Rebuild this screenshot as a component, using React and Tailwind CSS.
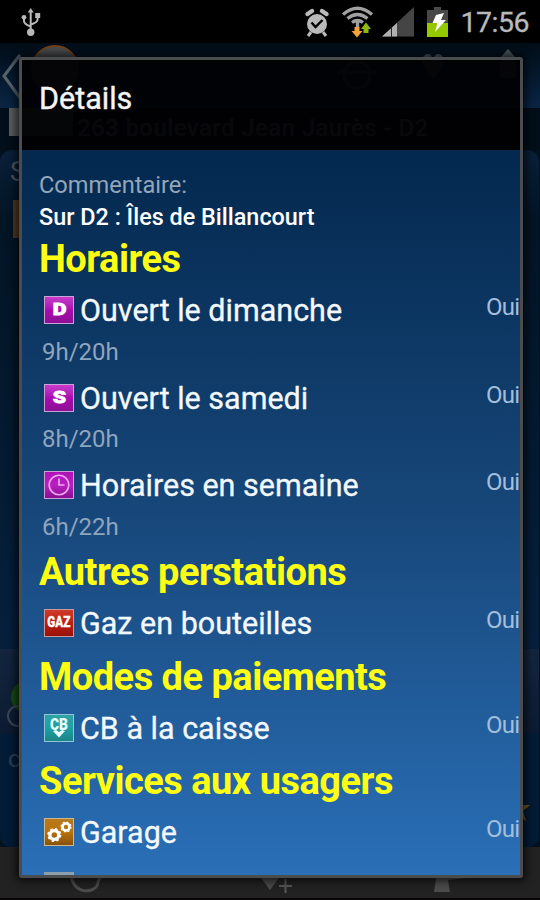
import React from 'react'

const sections = [
  {
    title: 'Horaires',
    items: [
      { icon: 'sunday', name: 'Ouvert le dimanche', detail: '9h/20h' },
      { icon: 'saturday', name: 'Ouvert le samedi', detail: '8h/20h' },
      { icon: 'clock', name: 'Horaires en semaine', detail: '6h/22h' },
    ],
  },
  { title: 'Autres perstations', items: [{ icon: 'gas', name: 'Gaz en bouteilles' }] },
  { title: 'Modes de paiements', items: [{ icon: 'card', name: 'CB à la caisse' }] },
  { title: 'Services aux usagers', items: [{ icon: 'gears', name: 'Garage' }] },
]

const tiles = {
  sunday: 'from-[#c63bc9] via-[#a80bb0] to-[#8c0f93] border-[#c9a0d8]',
  saturday: 'from-[#c63bc9] via-[#a80bb0] to-[#8c0f93] border-[#c9a0d8]',
  clock: 'from-[#b010b8] via-[#b81fc0] to-[#8a0f92] border-[#c9a0d8]',
  gas: 'from-[#cf3a2a] via-[#bd1d12] to-[#991108] border-[#c99a9a]',
  card: 'from-[#2fa3a6] via-[#1fa0a3] to-[#1b8588] border-[#8fc6d6]',
  gears: 'from-[#b87a1c] via-[#b8720f] to-[#8a5208] border-[#cdb98f]',
}

function Gear({ cx, cy, r }) {
  return (
    <g transform={`translate(${cx} ${cy})`} stroke="#fff" fill="none">
      <circle r={r} strokeWidth={r * 0.75} />
      <circle r={r * 1.4} strokeWidth={r * 0.4} strokeDasharray={`${r * 0.55} ${r * 0.55}`} />
    </g>
  )
}

function Glyph({ name }) {
  if (name === 'sunday') return <span className="text-[17px] font-black scale-x-125 [-webkit-text-stroke:0.8px_white]">D</span>
  if (name === 'saturday') return <span className="text-[17px] font-black scale-x-125 [-webkit-text-stroke:0.8px_white]">S</span>
  if (name === 'gas') return <span className="text-[15px] font-black scale-x-[0.78] [-webkit-text-stroke:0.3px_white]">GAZ</span>
  if (name === 'clock') {
    return (
      <svg viewBox="0 0 28 26" className="w-7 h-[26px]" fill="none" stroke="#f0a8f4" strokeWidth="1.6">
        <circle cx="14" cy="13" r="9.8" />
        <path d="M14 6.500V13h5.500" />
      </svg>
    )
  }
  if (name === 'card') {
    return (
      <svg viewBox="0 0 28 26" className="w-7 h-[26px]" fill="#e8ffff">
        <text x="14" y="14.500" textAnchor="middle" fontSize="17" fontWeight="900" textLength="18" lengthAdjust="spacingAndGlyphs">CB</text>
        <path d="M8 16l3-1 3 2 3-2 3 1-6 6.500z" />
      </svg>
    )
  }
  return (
    <svg viewBox="0 0 28 26" className="w-7 h-[26px]">
      <Gear cx={9.3} cy={16} r={4.4} />
      <Gear cx={21} cy={8} r={3.5} />
    </svg>
  )
}

function Tile({ name }) {
  return (
    <span className={`flex w-[30px] h-7 shrink-0 items-center justify-center border bg-linear-to-b leading-none text-white ${tiles[name]}`}>
      <Glyph name={name} />
    </span>
  )
}

function Item({ item }) {
  return (
    <div>
      <div className="flex h-[54.8px] pt-[12px] pl-[5px]">
        <Tile name={item.icon} />
        <span className="ml-[6px] -mt-[3px] text-[30.5px] leading-[36px] text-[#f3f8fc] [-webkit-text-stroke:0.3px_#f3f8fc]">{item.name}</span>
        <span className="ml-auto w-[34px] shrink-0 -mt-[4px] text-[24px] leading-[30px] tracking-[-0.7px] text-[#a3bedb]">Oui</span>
      </div>
      {item.detail && (
        <div className="h-[33px] pl-[3px] text-[24px] leading-[26px] text-[#8ea5bd]">{item.detail}</div>
      )}
    </div>
  )
}

function StatusBar() {
  return (
    <div className="flex h-[43px] items-center bg-black text-[#b9b9b9]">
      <svg viewBox="0 0 22 30" className="ml-5 w-[22px] h-[30px]" fill="#b9b9b9" stroke="#b9b9b9" strokeWidth="2">
        <path d="M10.7 5v20M4 10v4q0 3 6.500 5.500M17.6 8v4.500q0 3-6.800 5" fill="none" />
        <path d="M10.7 1l3 4.500h-6z" strokeWidth="0" />
        <circle cx="10.7" cy="25.200" r="3.700" strokeWidth="0" />
        <circle cx="4" cy="10.300" r="2.400" strokeWidth="0" />
        <path d="M15.2 6h5v5h-5z" strokeWidth="0" />
      </svg>
      <svg viewBox="0 0 150 34" className="ml-auto w-[150px] h-[34px]">
        <g fill="#b9b9b9" stroke="#b9b9b9">
          <circle cx="18" cy="19" r="10" strokeWidth="0" />
          <path d="M8.500 9l4.500-3M23 6l4.500 3" strokeWidth="4.500" strokeLinecap="round" />
          <path d="M12 27l-3 4M24 27l3 4" strokeWidth="3" />
          <path d="M12.500 17.500l4 4.500 7-7" fill="none" stroke="#000" strokeWidth="2.400" />
        </g>
        <g fill="none" stroke="#a0a0a0" strokeWidth="3.400">
          <path d="M44 9.500Q58.500-3 73 9.500" />
          <path d="M48.500 13.500q10-8 20 0" />
          <path d="M53 17.500q5.500-4 11 0" />
          <path d="M58.500 17v6" />
        </g>
        <path d="M55.500 22h5v4h3l-5.500 6.500-5.500-6.500h3z" fill="#f5a23b" />
        <path d="M64.500 28h5v-4h2.500l-5-6.500-5 6.500h2.500z" fill="#8fb80e" />
        <path d="M115 2v29.500H83z" fill="#454545" />
        <path d="M83 31.500L98 18v13.500z" fill="#b0b0b0" />
        <path d="M92.500 22v10" stroke="#222" strokeWidth="1" />
        <path d="M128 5h7V2h7v3h7v14h-21z" fill="#484848" />
        <path d="M128 18h21v14h-21z" fill="#94c800" />
        <path d="M137 10l8-2-3 7h5l-11 12 2.500-9h-5z" fill="#fff" />
      </svg>
      <span className="ml-[12px] mr-[11px] mt-[3px] text-[28.5px] leading-none tracking-[-0.5px] [-webkit-text-stroke:0.3px_#b9b9b9]">17:56</span>
    </div>
  )
}

function StationPage() {
  return (
    <div className="flex h-full flex-col bg-[#03101d]">
      <StatusBar />
      <div className="flex h-[65px] justify-between overflow-hidden bg-linear-to-b from-[#020d18] to-[#0a2544]">
        <div className="flex">
          <svg viewBox="0 0 22 60" className="w-[22px] h-[60px]" fill="none" stroke="#56636d" strokeWidth="3">
            <path d="M20 12L4 33l16 22" />
          </svg>
          <span className="ml-[9px] mt-[2px] size-12 rounded-full border-2 border-[#70431c] bg-[#4b4c4e]" />
        </div>
        <svg viewBox="0 0 210 60" className="w-[210px] h-[60px]" fill="#4b5a60">
          <path d="M178 6l8 9v20h-16V15z" />
          <path d="M95 12c5-3 7 2 8 4 1-2 3-7 8-4 8 6-3 18-8 24-5-6-16-18-8-24z" />
          <circle cx="27" cy="32" r="13" fill="none" stroke="#4b5a60" strokeWidth="3" />
          <path d="M8 29h38" stroke="#4b5a60" strokeWidth="3" />
        </svg>
      </div>
      <div className="flex h-[42px] bg-[#020e1a]">
        <span className="ml-[9px] h-7 w-16 shrink-0 bg-[#5a5c5d]" />
        <span className="ml-1 mt-[5px] text-[24px] font-medium leading-[30px] tracking-[0.4px] whitespace-nowrap text-[#929292]">263 boulevard Jean Jaurès - D2</span>
      </div>
      <div className="flex w-[539px] flex-1 flex-col overflow-hidden rounded-xl bg-linear-to-b from-[#0a2039] from-0% via-[#031424] via-10% to-[#082548] to-100%">
        <div className="h-[50px] pl-[10px] pt-1 text-[27px] leading-9 text-[#4b5762]">S</div>
        <div className="ml-[13px] h-[38px] w-6 bg-[#533b22]" />
        <div className="mt-auto flex h-[84px] flex-col bg-linear-to-b from-[#13253e] to-[#0c1b31]">
          <div className="ml-[11px] mt-8 h-8 w-8 rounded-full bg-[#164b14]" />
          <div className="ml-[7px] -mt-2 h-[22px] w-[22px] shrink-0 rounded-full border-2 border-[#39465a]" />
        </div>
        <div className="flex h-[114px] justify-between bg-[#031b35]">
          <span className="ml-2 mt-2 text-[24px] text-[#2b4158]">c</span>
          <svg viewBox="0 0 24 24" className="mr-[9px] mt-[66px] size-6" fill="#755713">
            <path d="M12 0l3 6h9l-7 6 3 10-8-6z" />
          </svg>
        </div>
      </div>
      <div className="flex h-[53px] items-start border-b-2 border-[#090507] bg-[#222]">
        <svg viewBox="0 0 540 51" className="w-[540px] h-[51px]">
          <path d="M71 26c0 22 26 22 27 9l4-8" fill="none" stroke="#4b4b4b" strokeWidth="3" />
          <path d="M258 27h24l-12 16z" fill="#4b4b4b" />
          <path d="M279 39h13M285.500 32v14" stroke="#555" strokeWidth="2" />
          <path d="M436 31h30l-18 2 2 12h-16z" fill="#4b4b4b" />
        </svg>
      </div>
    </div>
  )
}

function DetailsDialog() {
  return (
    <div className="absolute left-[19px] top-[57px] flex h-[821px] w-[504px] flex-col overflow-hidden rounded-[3px] border-3 border-[#4b4c4d] shadow-[0_0_8px_3px_rgba(0,0,0,0.7)]">
      <div className="h-[90px] shrink-0 bg-[#010103]/95 pl-[17px] pt-[21px]">
        <h1 className="text-[30.5px] leading-[36px] text-[#f4f4f4] [-webkit-text-stroke:0.4px_#f4f4f4]">Détails</h1>
      </div>
      <div className="flex-1 overflow-hidden bg-linear-to-b from-[#04284e] from-0% via-[#17477a] via-50% to-[#2a6fb7] to-100% pl-[17px]">
        <p className="mt-[20px] text-[23.6px] leading-[30px] text-[#93a6ba]">Commentaire:</p>
        <p className="mt-[2px] h-[32px] text-[23.4px] leading-[31px] font-medium text-white">Sur D2 : Îles de Billancourt</p>
        {sections.map((section) => (
          <section key={section.title}>
            <h2 className="h-[49.8px] text-[38px] leading-[51px] font-bold tracking-[-0.5px] text-[#feff13]">{section.title}</h2>
            {section.items.map((item) => (
              <Item key={item.name} item={item} />
            ))}
          </section>
        ))}
        <div className="ml-[5px] mt-[11px] h-7 w-[30px] bg-[#8d9fae]" />
      </div>
    </div>
  )
}

export default function App() {
  return (
    <main className="relative h-[900px] w-[540px] overflow-hidden bg-black font-['Roboto',sans-serif]">
      <StationPage />
      <DetailsDialog />
    </main>
  )
}
